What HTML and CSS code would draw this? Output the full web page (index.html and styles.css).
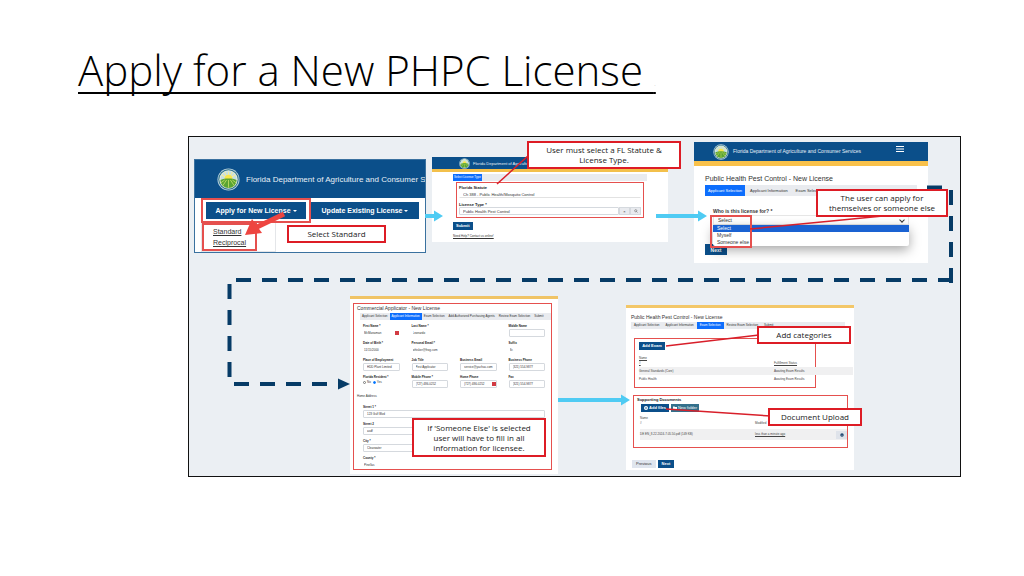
FILE: index.html
```html
<!DOCTYPE html>
<html lang="en">
<head>
    <meta charset="utf-8">
    <title>Apply for a New PHPC License</title>
    <link rel="stylesheet" href="styles.css">
</head>
<body>
    <svg class="symbols" aria-hidden="true">
        <symbol id="seal" viewBox="0 0 24 24">
            <circle cx="12" cy="12" r="11.5" fill="#b9d2dc"/>
            <circle cx="12" cy="12" r="10.6" fill="#2a6f8c"/>
            <circle cx="12" cy="12" r="9.6" fill="#e4ecd8"/>
            <path d="M3.5 12a8.5 8.5 0 0 1 17 0z" fill="#c3dfe6"/>
            <path d="M12 12L5 7M12 12L8 4.5M12 12V4M12 12l4-7.500M12 12l7-5" stroke="#f3ec9a" stroke-width="1.200"/>
            <circle cx="12" cy="11" r="4" fill="#f6e64a"/>
            <path d="M3.500 12.500c5-2 12-2 17 0a8.500 8.500 0 0 1-17 0z" fill="#5aa433"/>
            <path d="M12 12.500v8M10 12.500l-4 6M14 12.500l4 6M8 12.500l-4 3M16 12.500l4 3" stroke="#c3dd62" stroke-width=".9"/>
        </symbol>
    </svg>

    <h1>Apply for a New PHPC License <span class="dot">.</span></h1>

    <main class="canvas">
        <!-- Step 1: menu -->
        <section class="node node-menu">
            <header class="bar bar-large">
                <svg class="seal"><use href="#seal"/></svg>
                <span>Florida Department of Agriculture and Consumer S</span>
            </header>
            <nav class="menu">
                <div class="marked menu-main"><button>Apply for New License <i class="caret"></i></button></div>
                <button>Update Existing License <i class="caret"></i></button>
            </nav>
            <div class="menu-drop">
                <div class="marked menu-list">
                    <a href="#">Standard</a>
                    <a href="#">Reciprocal</a>
                </div>
            </div>
        </section>

        <!-- Step 2: statute -->
        <section class="node node-statute">
            <header class="bar bar-small">
                <svg class="seal"><use href="#seal"/></svg>
                <span>Florida Department of Agriculture and Consumer Services</span>
            </header>
            <div class="statute-body">
                <div class="tabs"><span class="tab active">Select License Type</span></div>
                <div class="marked statute-form">
                    <div class="field">
                        <label for="statute">Florida Statute</label>
                        <input id="statute" class="plain" value="Ch 388 - Public Health/Mosquito Control">
                    </div>
                    <div class="field">
                        <label for="type">License Type *</label>
                        <div class="lookup">
                            <input id="type" value="Public Health Pest Control">
                            <button aria-label="Clear">×</button>
                            <button aria-label="Search">
                                <svg viewBox="0 0 8 8"><circle cx="3.500" cy="3.500" r="2.200" fill="none" stroke="#555"/><path d="M5 5l2 2" stroke="#555"/></svg>
                            </button>
                        </div>
                    </div>
                </div>
                <button class="btn">Submit</button>
                <a class="support" href="#">Need Help? Contact us online!</a>
            </div>
        </section>

        <!-- Step 3: applicant -->
        <section class="node node-applicant">
            <header class="bar bar-medium">
                <svg class="seal"><use href="#seal"/></svg>
                <span>Florida Department of Agriculture and Consumer Services</span>
                <svg class="burger" viewBox="0 0 8 6"><path d="M0 .5h8M0 3h8M0 5.500h8" stroke="#fff"/></svg>
            </header>
            <div class="applicant-body">
                <h2>Public Health Pest Control - New License</h2>
                <div class="tabs">
                    <span class="tab active">Applicant Selection</span>
                    <span class="tab">Applicant Information</span>
                    <span class="tab">Exam Selection</span>
                </div>
                <div class="who">
                    <label for="who">Who is this license for? *</label>
                    <div class="select-wrap">
                        <select id="who"><option>Select</option><option>Myself</option><option>Someone else</option></select>
                        <ul class="options">
                            <li class="chosen">Select</li>
                            <li>Myself</li>
                            <li>Someone else</li>
                        </ul>
                        <div class="marked who-mark"></div>
                    </div>
                </div>
                <button class="btn">Next</button>
            </div>
        </section>

        <!-- Step 4: licensee details -->
        <section class="node node-details">
            <div class="marked details">
                <h2>Commercial Applicator - New License</h2>
                <div class="tabs">
                    <span class="tab">Applicant Selection</span>
                    <span class="tab active">Applicant Information</span>
                    <span class="tab">Exam Selection</span>
                    <span class="tab">Add Authorized Purchasing Agents</span>
                    <span class="tab">Review Exam Selection</span>
                    <span class="tab">Submit</span>
                </div>
                <div class="details-form">
                    <div class="grid">
                        <div class="field has-flag"><label for="first">First Name *</label><input id="first" class="plain" value="McManaman"></div>
                        <div class="field"><label for="last">Last Name *</label><input id="last" class="plain" value="Leonardo"></div>
                        <div class="field third"><label for="middle">Middle Name</label><input id="middle"></div>
                        <div class="field"><label for="birth">Date of Birth *</label><input id="birth" class="plain" value="11/15/2000"></div>
                        <div class="field"><label for="mail">Personal Email *</label><input id="mail" class="plain under" value="whisker@frog.com"></div>
                        <div class="field third"><label for="suffix">Suffix</label><input id="suffix" class="plain" value="Sr."></div>
                        <div class="field"><label for="place">Place of Employment</label><input id="place" value="HDD Plant Limited"></div>
                        <div class="field"><label for="job">Job Title</label><input id="job" value="Pest Applicator"></div>
                        <div class="field"><label for="bmail">Business Email</label><input id="bmail" class="under" value="service@yachas.com"></div>
                        <div class="field"><label for="bphone">Business Phone</label><input id="bphone" value="(321) 554-9877"></div>
                        <fieldset class="field">
                            <legend>Florida Resident *</legend>
                            <div class="radios">
                                <label><input type="radio" name="res">No</label>
                                <label><input type="radio" name="res" checked>Yes</label>
                            </div>
                        </fieldset>
                        <div class="field"><label for="mobile">Mobile Phone *</label><input id="mobile" value="(727) 486-0252"></div>
                        <div class="field has-flag"><label for="home">Home Phone</label><input id="home" value="(727) 486-0252"></div>
                        <div class="field"><label for="fax">Fax</label><input id="fax" value="(321) 554-9877"></div>
                    </div>
                    <p class="home">Home Address</p>
                    <div class="address">
                        <div class="field"><label for="s1">Street 1 *</label><input id="s1" value="123 Gulf Blvd"></div>
                        <div class="field"><label for="s2">Street 2</label><input id="s2" value="asdf"></div>
                        <div class="field"><label for="city">City *</label><input id="city" value="Clearwater"></div>
                        <div class="field"><label for="county">County *</label><input id="county" class="plain" value="Pinellas"></div>
                    </div>
                </div>
            </div>
        </section>

        <!-- Step 5: exams and documents -->
        <section class="node node-exams">
            <h2>Public Health Pest Control - New License</h2>
            <div class="tabs">
                <span class="tab">Applicant Selection</span>
                <span class="tab">Applicant Information</span>
                <span class="tab active">Exam Selection</span>
                <span class="tab">Review Exam Selection</span>
                <span class="tab">Submit</span>
            </div>
            <div class="marked exams">
                <button class="btn">Add Exam</button>
                <table>
                    <tr><th>Name<br>#</th><th>Fulfillment Status</th></tr>
                    <tr class="odd"><td>General Standards (Core)</td><td>Awaiting Exam Results</td></tr>
                    <tr><td>Public Health</td><td>Awaiting Exam Results</td></tr>
                </table>
            </div>
            <div class="marked docs">
                <h3>Supporting Documents</h3>
                <div class="doc-buttons">
                    <button class="btn"><svg viewBox="0 0 8 8"><circle cx="4" cy="4" r="4" fill="#fff"/><path d="M4 2v4M2 4h4" stroke="#0b4f8a"/></svg>Add files</button>
                    <button class="btn teal"><svg viewBox="0 0 8 8"><path d="M0 1h3l1 1h4v5H0z" fill="#fff"/></svg>New folder</button>
                </div>
                <table>
                    <tr><th>Name<br>#</th><th>Modified</th><th></th></tr>
                    <tr class="odd"><td>DE EN_8.22.2024-7.05.50.pdf (149 KB)</td><td class="under">less than a minute ago</td><td><button class="gear" aria-label="Options"><svg viewBox="0 0 8 8"><circle cx="4" cy="4" r="3.500" fill="#163f6b"/><path d="M2.500 3.500L4 5l1.500-1.500" stroke="#fff" fill="none"/></svg></button></td></tr>
                </table>
            </div>
            <div class="foot">
                <button class="btn light">Previous</button>
                <button class="btn">Next</button>
            </div>
        </section>

        <!-- Connectors -->
        <svg class="lines" width="771" height="339" viewBox="0 0 771 339" fill="none">
            <g stroke="#063b66" stroke-width="4" stroke-dasharray="15 11">
                <path d="M738 50.500h15"/>
                <path d="M762 53V146"/>
                <path d="M764 143H42"/>
                <path d="M40.500 147V240"/>
                <path d="M45 247H150"/>
            </g>
            <path d="M149 241.500l12 5.500-12 5.500z" fill="#063b66"/>
            <g stroke="#4fcbf3" stroke-width="4">
                <path d="M236 79h13M467 79h44M369 263h64"/>
            </g>
            <path d="M245 73.500l9 5.500-9 5.500zM509 73.500l9 5.500-9 5.500zM432 257.500l9 5.500-9 5.500z" fill="#4fcbf3"/>
            <path d="M95 77L68 90" stroke="#ee4540" stroke-width="5"/>
            <path d="M56 98l7-16 10 14z" fill="#ee4540"/>
            <g stroke="#d81f2a" stroke-width="1.500">
                <path d="M340 18L308 47"/>
                <path d="M694 79L561 92"/>
                <path d="M570 198L477 209"/>
                <path d="M582 279L477 272"/>
            </g>
        </svg>

        <div class="callout call-standard">Select Standard</div>
        <div class="callout call-statute">User must select a FL Statute &amp;<br>License Type.</div>
        <div class="callout call-apply">The user can apply for<br>themselves or someone else</div>
        <div class="callout call-else">If 'Someone Else' is selected<br>user will have to fill in all<br>information for licensee.</div>
        <div class="callout call-add">Add categories</div>
        <div class="callout call-upload">Document Upload</div>
    </main>
</body>
</html>
```
FILE: styles.css
```css
* {
    box-sizing: border-box;
}
body {
    margin: 0;
    padding: 40px 63px 40px 78px;
    background-color: #fff;
    color: #333;
    font-family: "Liberation Sans", Arial, sans-serif;
    font-size: 4px;
    line-height: 5px;
}
h1 {
    margin: 0 0 36px;
    color: #000;
    font-family: "Open Sans", "Noto Sans", sans-serif;
    font-size: 42px;
    font-weight: 300;
    line-height: 60px;
    white-space: nowrap;
    text-decoration: underline;
    text-decoration-thickness: 2px;
    text-decoration-skip-ink: none;
    text-underline-offset: 6px;
}
.dot {
    font-size: 8px;
    line-height: 8px;
    color: #bbb;
}
h2, h3, p, ul {
    margin: 0;
    padding: 0;
}
h2 {
    font-size: 5px;
    font-weight: normal;
    line-height: 8px;
}
a {
    color: inherit;
}
button, input, select {
    margin: 0;
    padding: 0;
    border: none;
    color: inherit;
    font: inherit;
}
.symbols {
    position: absolute;
    width: 0;
    height: 0;
}
.canvas {
    position: relative;
    height: 341px;
    min-width: 773px;
    margin-left: 110px;
    border: 1px solid #111;
    background-color: #ebeff3;
    overflow: hidden;
}
.node {
    position: absolute;
    background-color: #fff;
}
.marked {
    border: 1px solid #e5504e;
}

/* headers */
.bar {
    display: flex;
    align-items: center;
    overflow: hidden;
    white-space: nowrap;
    background-color: #0b4f8a;
    color: #e8f0f7;
}
.seal {
    flex: none;
}
.bar-large {
    height: 38px;
    padding-left: 22px;
    gap: 6px;
    font-size: 8px;
}
.bar-large .seal {
    width: 23px;
    height: 23px;
}
.bar-small {
    height: 15px;
    padding-left: 27px;
    gap: 3px;
    border-bottom: 3px solid #f3c04b;
}
.bar-small .seal {
    width: 11px;
    height: 11px;
}
.bar-medium {
    height: 24px;
    padding: 0 24px 0 19px;
    gap: 4px;
    border-bottom: 5px solid #f9c14a;
    font-size: 5px;
}
.bar-medium .seal {
    width: 16px;
    height: 16px;
}
.burger {
    width: 8px;
    height: 6px;
    margin: 0 0 5px auto;
}

/* shared pieces */
.tabs {
    display: flex;
    height: 7px;
    background-color: #e9ebef;
    font-size: 3px;
    line-height: 7px;
    white-space: nowrap;
}
.tab {
    padding: 0 3px;
}
.active {
    background-color: #0d6efd;
    color: #fff;
}
.btn {
    display: inline-flex;
    align-items: center;
    justify-content: center;
    gap: 1px;
    height: 8px;
    padding: 0 5px;
    background-color: #0b4f8a;
    color: #fff;
    font-weight: bold;
    line-height: 8px;
}
.btn svg {
    width: 4px;
    height: 4px;
}
.field {
    display: flex;
    flex-direction: column;
    min-width: 0;
    margin: 0;
    padding: 0;
    border: none;
}
.field > label, legend {
    display: block;
    padding: 0;
    color: #222;
    font-weight: bold;
    line-height: 5px;
}
.field input {
    width: 100%;
    height: 8px;
    padding: 0 3px;
    border: 1px solid #d5d9de;
    border-radius: 1px;
}
.field .plain {
    border-color: transparent;
    padding: 0;
}
.under {
    text-decoration: underline;
}

/* step 1 */
.node-menu {
    left: 5px;
    top: 22px;
    width: 232px;
    height: 94px;
    border: 1px solid #3a719f;
}
.menu {
    display: flex;
    align-items: center;
    font-size: 7px;
    font-weight: bold;
    padding-left: 6px;
}
.menu button {
    height: 17px;
    width: 108px;
    background-color: #0b4f8a;
    color: #fff;
}
.menu-main {
    padding: 2px 3px;
    border-width: 2px;
}
.menu-main button {
    width: 100px;
}
.caret {
    display: inline-block;
    vertical-align: middle;
    border: 2px solid transparent;
    border-top-color: #fff;
    border-bottom: none;
}
.menu-drop {
    width: 75px;
    margin-left: 6px;
    border: 1px solid #e4e6e9;
    border-top: none;
}
.menu-list {
    display: flex;
    flex-direction: column;
    width: 55px;
    padding: 1px 9px;
    border-width: 2px;
    font-size: 7px;
    line-height: 11px;
}

/* step 2 */
.node-statute {
    left: 243px;
    top: 20px;
    width: 236px;
    height: 85px;
}
.statute-body {
    padding: 2px 21px;
}
.statute-body .tab {
    padding: 0 1px;
}
.statute-form {
    display: flex;
    flex-direction: column;
    gap: 4px;
    margin: 1px 3px 4px;
    padding: 2px;
}
.statute-form .plain {
    padding-left: 3px;
    border-bottom-color: #e2e2e2;
}
.lookup {
    display: flex;
}
.lookup button {
    width: 11px;
    flex: none;
    background-color: #e9ebef;
    border: 1px solid #d5d9de;
}
.lookup svg {
    display: block;
    width: 4px;
    height: 4px;
    margin: auto;
}
.statute-body > .btn {
    padding: 0 3px;
}
.support {
    display: block;
    margin-top: 4px;
    font-size: 3px;
}

/* step 3 */
.node-applicant {
    left: 505px;
    top: 5px;
    width: 234px;
    height: 121px;
}
.applicant-body {
    padding: 7px 11px;
}
.applicant-body h2 {
    font-size: 7px;
    line-height: 12px;
}
.applicant-body .tabs {
    height: 11px;
    font-size: 4px;
    line-height: 11px;
}
.applicant-body .tab + .tab {
    padding-left: 5px;
}
.who {
    padding: 12px 8px 0;
    font-size: 5px;
}
.who label {
    display: block;
    font-weight: bold;
    line-height: 7px;
}
.select-wrap {
    position: relative;
}
.select-wrap select {
    display: block;
    width: 100%;
    height: 10px;
    padding-left: 4px;
    appearance: none;
    background: #fff;
    border: 1px solid #e6e6e6;
}
.select-wrap::after {
    content: "";
    position: absolute;
    top: 3px;
    right: 5px;
    width: 3px;
    height: 3px;
    border-right: 1px solid #333;
    border-bottom: 1px solid #333;
    transform: rotate(45deg);
}
.options {
    position: absolute;
    top: 10px;
    left: 0;
    width: 100%;
    border-radius: 2px;
    background-color: #fff;
    box-shadow: 0 4px 12px rgba(0, 0, 0, 0.35);
    list-style: none;
    line-height: 7px;
}
.options li {
    padding-left: 4px;
}
.options .chosen {
    background-color: #1a62d2;
    color: #fff;
}
.who-mark {
    position: absolute;
    top: 0;
    left: -3px;
    width: 42px;
    height: 33px;
    border-width: 2px;
}
.applicant-body > .btn {
    width: 22px;
    height: 11px;
    margin-top: 19px;
    font-size: 5px;
}

/* step 4 */
.node-details {
    left: 161px;
    top: 159px;
    width: 208px;
    height: 178px;
    padding: 4px 6px 0 3px;
    border-top: 3px solid #f0c466;
    font-size: 3px;
}
.details h2 {
    padding-left: 3px;
}
.details .tabs {
    margin: 1px 0 4px 6px;
}
.details .tab {
    padding: 0 2px;
}
.details-form {
    padding: 0 6px 0 9px;
}
.grid {
    display: grid;
    grid-template-columns: repeat(4, 1fr);
    gap: 4px 12px;
}
.third {
    grid-column: 4;
}
.has-flag {
    position: relative;
}
.has-flag::after {
    content: "";
    position: absolute;
    right: 1px;
    bottom: 2px;
    width: 4px;
    height: 4px;
    background-color: #d23b43;
}
.radios {
    display: flex;
    gap: 2px;
}
.radios label {
    display: flex;
    align-items: center;
    gap: 1px;
}
.radios input {
    width: 3px;
    height: 3px;
}
.home {
    margin-left: -6px;
    line-height: 17px;
}
.address {
    display: grid;
    gap: 4px;
}

/* step 5 */
.node-exams {
    left: 437px;
    top: 168px;
    width: 228px;
    height: 165px;
    padding: 5px 5px 0;
    border-top: 3px solid #f3c768;
    font-size: 4px;
}
.node-exams .tabs {
    margin: 1px 4px 9px 0;
}
.exams {
    width: 182px;
    height: 50px;
    margin: 0 0 7px 3px;
    padding: 3px 0 0 4px;
}
table {
    border-collapse: collapse;
    color: #444;
    font-size: 3px;
    white-space: nowrap;
}
th, td {
    padding: 0;
    text-align: left;
    font-weight: normal;
    vertical-align: bottom;
}
.odd {
    background-color: #f0f0f1;
}
.exams .btn {
    display: flex;
    width: 26px;
    padding: 0;
}
.exams table {
    width: 214px;
    margin-top: 6px;
}
.exams th {
    text-decoration: underline;
    padding-bottom: 1px;
}
.exams td {
    line-height: 8px;
    vertical-align: middle;
}
.exams th:first-child {
    width: 135px;
}
.docs {
    height: 53px;
    width: 215px;
    margin-left: 2px;
    padding: 1px 1px 0 3px;
}
.docs h3 {
    font-size: 4px;
    line-height: 6px;
    color: #222;
}
.doc-buttons {
    display: flex;
    gap: 2px;
    margin: 1px 0 4px 4px;
}
.teal {
    background-color: #33708c;
    font-weight: normal;
}
.doc-buttons .btn {
    width: 28px;
    padding: 0;
    font-size: 4px;
}
.docs table {
    width: 207px;
    margin-left: 3px;
}
.docs th:first-child {
    width: 115px;
}
.docs th {
    padding-bottom: 3px;
}
.docs td {
    height: 11px;
    vertical-align: middle;
}
.docs td:last-child {
    width: 11px;
}
.gear {
    display: flex;
    align-items: center;
    justify-content: center;
    width: 11px;
    height: 8px;
    background-color: #dfe3ea;
}
.gear svg {
    width: 4px;
    height: 4px;
}
.foot {
    display: flex;
    gap: 2px;
    margin: 12px 0 0 1px;
}
.foot .btn {
    padding: 0 4px;
}
.light {
    background-color: #dfe5ee;
    color: #333;
    font-weight: normal;
}

/* connectors and callouts */
.lines {
    position: absolute;
    left: 0;
    top: 0;
}
.callout {
    position: absolute;
    display: flex;
    align-items: center;
    justify-content: center;
    border: 2px solid #dd1c25;
    background-color: #fff;
    color: #222;
    font-family: "Open Sans", "Noto Sans", sans-serif;
    font-size: 8px;
    line-height: 10px;
    text-align: center;
    white-space: nowrap;
}
.call-standard {
    left: 98px;
    top: 88px;
    width: 99px;
    height: 18px;
}
.call-statute {
    left: 338px;
    top: 4px;
    width: 154px;
    height: 28px;
}
.call-apply {
    left: 627px;
    top: 52px;
    width: 132px;
    height: 28px;
}
.call-else {
    left: 223px;
    top: 281px;
    width: 134px;
    height: 39px;
}
.call-add {
    left: 568px;
    top: 189px;
    width: 94px;
    height: 18px;
}
.call-upload {
    left: 579px;
    top: 271px;
    width: 94px;
    height: 18px;
}
```
